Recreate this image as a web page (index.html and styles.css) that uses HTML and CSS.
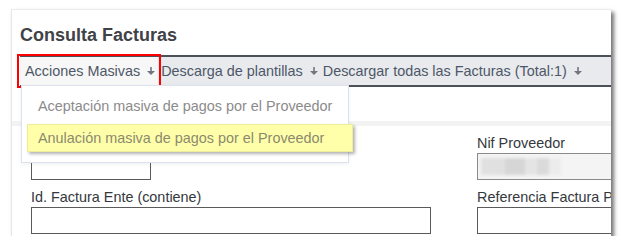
FILE: index.html
```html
<!DOCTYPE html>
<html lang="es">
<head>
  <meta charset="UTF-8" />
  <title>Consulta Facturas</title>
  <link rel="stylesheet" href="styles.css">
</head>
<body>

  <div class="panel">
    <h1 class="title">Consulta Facturas</h1>

    <nav class="menubar">
      <div class="menu-item active">
        Acciones Masivas
        <svg class="caret" viewBox="0 0 8 8"><rect x="3.2" y="0" width="1.6" height="4.5"/><polygon points="0,4 8,4 4,8"/></svg>
      </div>
      <div class="menu-item">
        Descarga de plantillas
        <svg class="caret" viewBox="0 0 8 8"><rect x="3.2" y="0" width="1.6" height="4.5"/><polygon points="0,4 8,4 4,8"/></svg>
      </div>
      <div class="menu-item">
        Descargar todas las Facturas (Total:1)
        <svg class="caret" viewBox="0 0 8 8"><rect x="3.2" y="0" width="1.6" height="4.5"/><polygon points="0,4 8,4 4,8"/></svg>
      </div>

      <!-- dropdown of Acciones Masivas -->
      <ul class="dropdown">
        <li>Aceptación masiva de pagos por el Proveedor</li>
        <li class="hover">Anulación masiva de pagos por el Proveedor</li>
      </ul>
    </nav>

    <div class="separator"></div>

    <form class="filters">
      <div class="field">
        <label>&nbsp;</label>
        <input type="text" class="short" />
      </div>
      <div class="field">
        <label>Nif Proveedor</label>
        <div class="input readonly"><span class="blurred"></span></div>
      </div>
      <div class="field">
        <label>Id. Factura Ente (contiene)</label>
        <input type="text" class="wide" />
      </div>
      <div class="field">
        <label>Referencia Factura Proveedor</label>
        <input type="text" />
      </div>
    </form>
  </div>

</body>
</html>
```

FILE: styles.css
```css
/* Base */
* {
  box-sizing: border-box;
}
html, body {
  margin: 0;
  padding: 0;
  background: #fff;
  font-family: 'Liberation Sans', Arial, sans-serif;
}

/* Screenshot panel with drop shadow */
.panel {
  margin: 9px 0 0 11px;
  width: 600px;
  height: 227px;
  background: #fff;
  border-top: 1px solid #ececec;
  border-left: 1px solid #e6e6e6;
  box-shadow: 3px 3px 4px rgba(0,0,0,0.55);
  overflow: hidden;
  position: relative;
}

.title {
  margin: 0;
  padding: 14px 0 0 8px;
  height: 45px;
  font-size: 18px;
  font-weight: bold;
  color: #3f4246;
  line-height: 22px;
}

/* Menu bar */
.menubar {
  position: relative;
  display: flex;
  margin-left: 8px;
  height: 32px;
  background: #e8eaed;
  border-top: 2px solid #4b5158;
  border-bottom: 2px solid #4b5158;
}

.menu-item {
  display: flex;
  align-items: center;
  gap: 6px;
  padding: 0 4px 0 4px;
  font-size: 14.4px;
  color: #4d5767;
  white-space: nowrap;
}
.menu-item.active {
  background: #f7f7f7;
  outline: 2px solid #f00;
  outline-offset: 1px;
  padding: 0 3px 0 5px;
  margin-right: 2px;
  position: relative;
  z-index: 2;
}
.menu-item + .menu-item {
  padding-left: 1px;
}
.caret {
  width: 8px;
  height: 8px;
  fill: #6f7680;
  margin-left: 1px;
}

/* Dropdown */
.dropdown {
  position: absolute;
  top: 28px;
  left: 1px;
  width: 328px;
  height: 78px;
  margin: 0;
  padding: 0;
  list-style: none;
  background: #fff;
  border: 1px solid #dde3ec;
  box-shadow: 0 1px 3px rgba(120,140,170,0.15);
  z-index: 3;
}
.dropdown li {
  font-size: 14.4px;
  color: #8b8b8b;
  padding: 2px 0 0 16px;
  line-height: 36px;
  height: 38px;
}
.dropdown li.hover {
  margin: 0 -5px 0 5px;
  height: 28px;
  line-height: 26px;
  padding: 0 0 0 10px;
  background: #ffffaa;
  color: #8b8a6e;
  border: 1px solid #eeee9a;
  box-shadow: 2px 2px 3px rgba(0,0,0,0.3);
}

.separator {
  margin-top: 34px;
  height: 5px;
  background: #f3f3f3;
}

/* Filters form */
.filters {
  display: grid;
  grid-template-columns: 446px 1fr;
  row-gap: 9px;
  padding: 9px 0 0 19px;
}
.field label {
  display: block;
  font-size: 14.4px;
  line-height: 17px;
  color: #34383d;
  margin-bottom: 1px;
  white-space: nowrap;
}
.field input,
.field .input {
  display: block;
  width: 200px;
  height: 27px;
  border: 1px solid #5a5a5a;
  background: #fff;
  margin: 0;
  padding: 0;
}
.field input.short {
  width: 120px;
}
.field input.wide {
  width: 400px;
}
.field .readonly {
  background: #f4f4f4;
  border-color: #8a8a8a;
  padding: 4px 3px;
}
.blurred {
  display: block;
  width: 80px;
  height: 17px;
  background: linear-gradient(90deg, #e0e0e0 0 30%, #d6d6d6 30% 55%, #e4e4e4 55% 70%, #dadada 70% 85%, #ececec 85%);
  filter: blur(1.5px);
}
```
